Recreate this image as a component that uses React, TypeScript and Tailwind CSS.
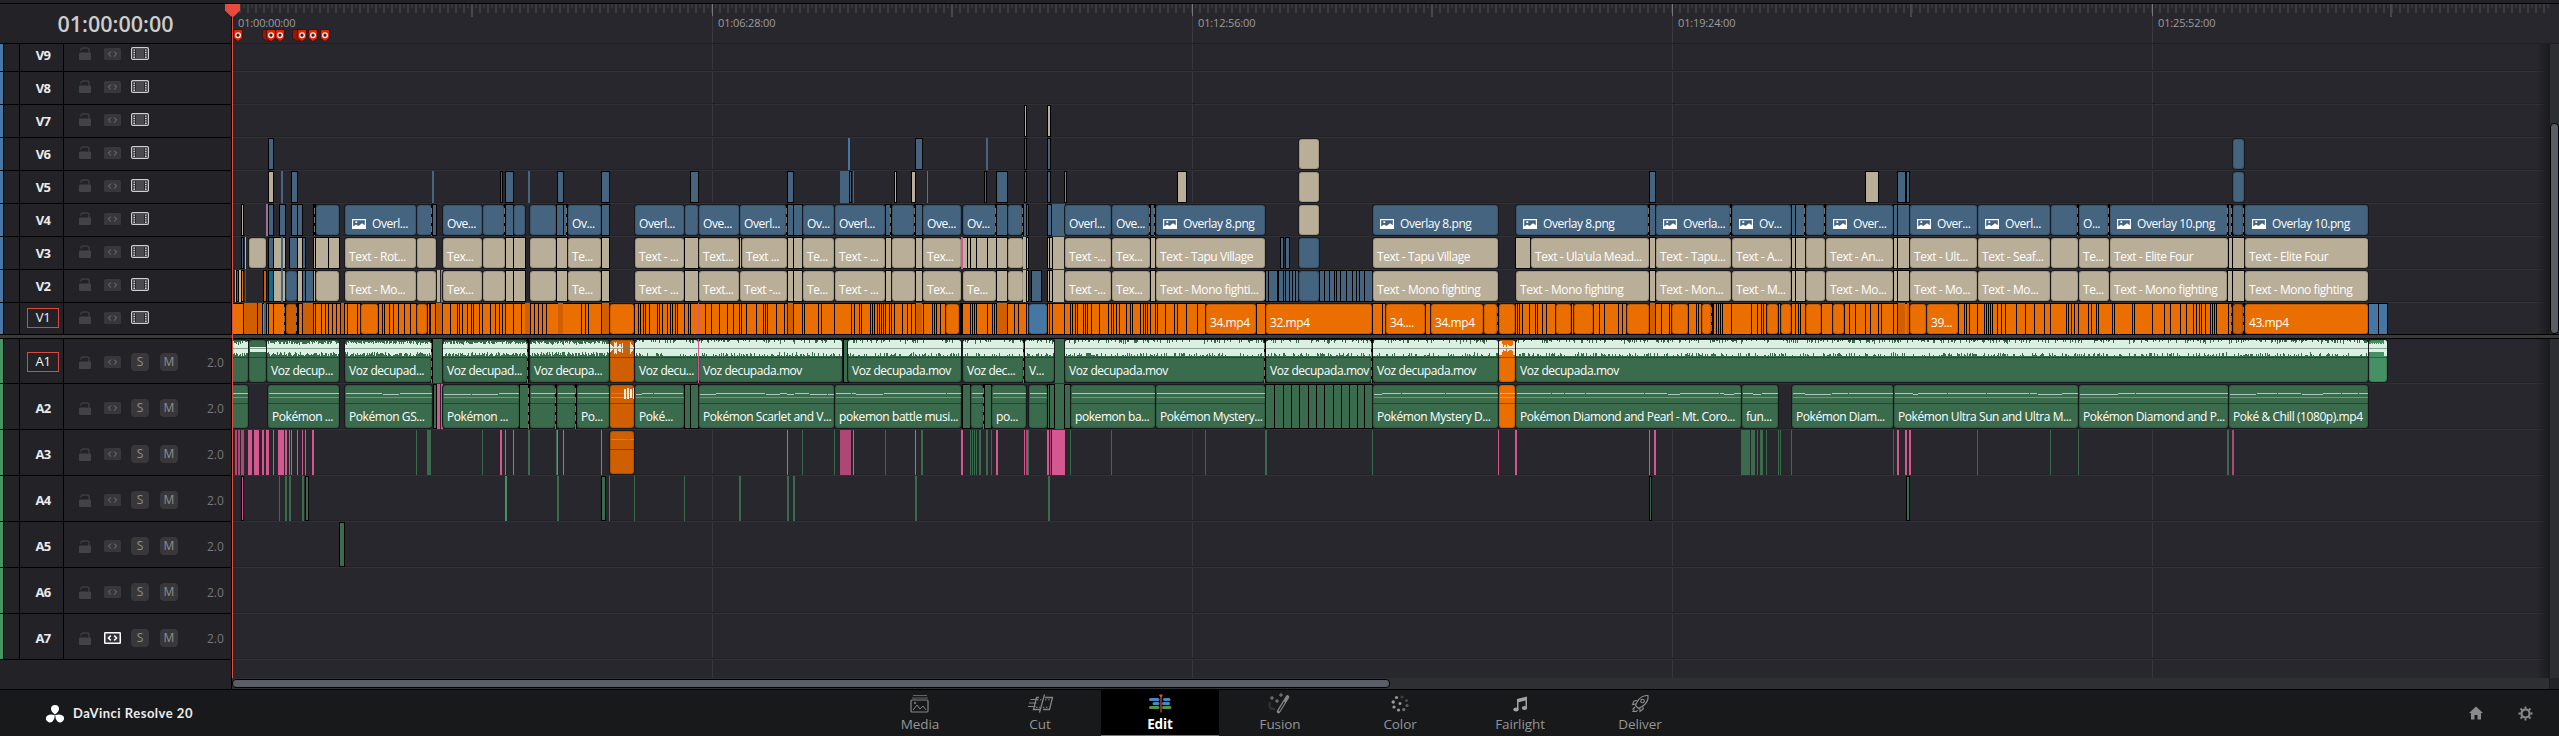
import type { ReactNode } from 'react';
import { clsx } from 'clsx';

const ORIGIN = 232;

type Tone = 'blue' | 'sky' | 'teal' | 'sand' | 'green' | 'mint' | 'orange' | 'rust' | 'pink' | 'rose' | 'violet';
type Kind = 'wide' | 'narrow' | 'bare' | 'dash';
type Clip = { kind: Kind; x: number; end: number; tone: Tone; label?: string; still?: boolean };

const tones: Record<Tone, string> = {
  blue: 'bg-[#446480]',
  sky: 'bg-[#4477a3]',
  teal: 'bg-[#17688a]',
  sand: 'bg-[#b9ae97]',
  green: 'bg-[#3a6b4d]',
  mint: 'bg-[#459164]',
  orange: 'bg-[#eb6e01]',
  rust: 'bg-[#cf5f00]',
  pink: 'bg-[#d2588f]',
  rose: 'bg-[#ae4676]',
  violet: 'bg-[#9a70a2]',
};

const W = (x: number, end: number, tone: Tone, label?: string, still?: boolean): Clip => ({ kind: 'wide', x, end, tone, label, still });
const N = (x: number, end: number, tone: Tone): Clip => ({ kind: 'narrow', x, end, tone });
const B = (x: number, end: number, tone: Tone): Clip => ({ kind: 'bare', x, end, tone });
const D = (x: number): Clip => ({ kind: 'dash', x, end: x + 2, tone: 'blue' });
const cuts = (tone: Tone, edges: number[]): Clip[] => edges.slice(0, -1).map((x, i) => N(x, edges[i + 1] + 1, tone));
const lines = (tone: Tone, xs: number[]): Clip[] => xs.map((x) => B(x, x + 1, tone));

const v7: Clip[] = [N(1024, 1027, 'sand'), N(1047, 1051, 'sand')];

const v6: Clip[] = [
  N(268, 274, 'blue'), B(848, 850, 'sky'), N(915, 923, 'blue'), B(986, 988, 'blue'), N(1024, 1027, 'blue'),
  N(1047, 1051, 'blue'), W(1299, 1319, 'sand'), W(2233, 2244, 'blue'),
];

const v5: Clip[] = [
  N(268, 274, 'sand'), B(281, 283, 'blue'), N(291, 298, 'blue'), B(432, 434, 'blue'), N(500, 503, 'blue'),
  N(505, 514, 'blue'), B(528, 530, 'blue'), N(557, 564, 'blue'), N(601, 610, 'blue'), N(690, 699, 'blue'),
  N(787, 794, 'blue'), B(840, 849, 'blue'), N(849, 852, 'blue'), B(853, 854, 'blue'), N(894, 897, 'sand'),
  N(911, 916, 'sand'), B(927, 928, 'sky'), N(984, 987, 'blue'), N(996, 1008, 'blue'), N(1024, 1027, 'blue'),
  N(1047, 1051, 'blue'), N(1064, 1067, 'pink'), N(1177, 1187, 'sand'), W(1299, 1319, 'sand'), N(1649, 1656, 'blue'),
  N(1865, 1879, 'sand'), N(1897, 1906, 'blue'), N(1906, 1910, 'blue'), W(2233, 2244, 'blue'),
];

const v4: Clip[] = [
  N(241, 244, 'sand'), B(266, 268, 'violet'), N(268, 274, 'blue'), N(279, 286, 'blue'), N(291, 298, 'blue'),
  N(297, 303, 'blue'), N(313, 316, 'blue'), D(314), W(316, 339, 'blue'), W(345, 416, 'blue', 'Overl...', true),
  W(417, 432, 'blue'), N(432, 437, 'blue'), D(431), W(443, 482, 'blue', 'Ove...'), W(483, 504, 'blue'), D(504),
  N(505, 514, 'blue'), W(514, 525, 'blue'), W(530, 556, 'blue'), N(556, 564, 'blue'), N(563, 567, 'blue'), D(566),
  W(568, 601, 'blue', 'Ov...'), N(601, 610, 'blue'), W(635, 684, 'blue', 'Overl...'), W(685, 698, 'blue'),
  W(699, 739, 'blue', 'Ove...'), W(740, 786, 'blue', 'Overl...'), D(786), N(787, 794, 'blue'), N(793, 803, 'blue'),
  W(803, 834, 'blue', 'Ov...'), W(835, 885, 'blue', 'Overl...'), N(885, 891, 'blue'), D(890), W(892, 914, 'blue'), D(914),
  N(915, 923, 'blue'), W(923, 961, 'blue', 'Ove...'), W(963, 996, 'blue', 'Ov...'), D(995), N(996, 1008, 'blue'),
  W(1008, 1022, 'blue'), D(1022), B(1023, 1026, 'blue'), N(1026, 1029, 'blue'), N(1047, 1052, 'blue'), B(1052, 1065, 'blue'),
  W(1065, 1111, 'blue', 'Overl...'), W(1112, 1149, 'blue', 'Ove...'), D(1149), N(1150, 1155, 'blue'), D(1154),
  W(1156, 1265, 'blue', 'Overlay 8.png', true), W(1299, 1319, 'sand'), W(1373, 1498, 'blue', 'Overlay 8.png', true),
  W(1516, 1648, 'blue', 'Overlay 8.png', true), D(1648), N(1649, 1656, 'blue'), W(1656, 1730, 'blue', 'Overla...', true), D(1730),
  W(1732, 1791, 'blue', 'Ov...', true), N(1791, 1796, 'blue'), N(1795, 1806, 'blue'), D(1804), W(1806, 1824, 'blue'), D(1824),
  W(1826, 1893, 'blue', 'Over...', true), N(1893, 1898, 'blue'), N(1897, 1910, 'blue'),
  W(1910, 1977, 'blue', 'Over...', true), W(1978, 2050, 'blue', 'Overl...', true), W(2051, 2077, 'blue'), D(2077),
  W(2079, 2108, 'blue', 'O...'), D(2108), W(2110, 2228, 'blue', 'Overlay 10.png', true), D(2227), N(2228, 2233, 'blue'), D(2231),
  W(2233, 2243, 'blue'), D(2243), W(2245, 2368, 'blue', 'Overlay 10.png', true),
];

const v3: Clip[] = [
  N(241, 244, 'blue'), B(245, 246, 'sand'), W(249, 266, 'sand'), N(268, 274, 'blue'), N(273, 286, 'sand'), B(281, 283, 'blue'),
  N(289, 298, 'blue'), N(297, 303, 'sand'), N(302, 306, 'blue'), N(313, 316, 'sand'), ...cuts('sand', [315, 328, 339]),
  W(345, 416, 'sand', 'Text - Rot...'), W(417, 436, 'sand'), W(443, 482, 'sand', 'Tex...'), W(483, 505, 'sand'),
  ...cuts('sand', [505, 513, 525]), W(530, 556, 'sand'), N(556, 568, 'sand'), W(568, 601, 'sand', 'Te...'), N(601, 610, 'sand'),
  W(635, 684, 'sand', 'Text - ...'), N(684, 699, 'sand'), W(699, 739, 'sand', 'Text...'), N(739, 742, 'sand'),
  W(742, 787, 'sand', 'Text ...'), ...cuts('sand', [787, 793, 802]), W(803, 834, 'sand', 'Te...'), W(835, 885, 'sand', 'Text - ...'),
  N(885, 892, 'sand'), W(892, 915, 'sand'), N(915, 923, 'sand'), W(923, 961, 'sand', 'Tex...'),
  ...cuts('sand', [962, 967, 970, 976, 987, 996, 1007]), B(961, 963, 'pink'), W(1008, 1023, 'sand'), B(1023, 1026, 'sand'), N(1026, 1029, 'sand'),
  ...cuts('sand', [1047, 1049, 1052]), B(1053, 1064, 'sand'), W(1065, 1111, 'sand', 'Text -...'), W(1112, 1150, 'sand', 'Tex...'),
  N(1150, 1156, 'sand'), W(1156, 1265, 'sand', 'Text - Tapu Village'), N(1280, 1284, 'blue'), N(1285, 1290, 'blue'),
  W(1299, 1319, 'blue'), W(1373, 1498, 'sand', 'Text - Tapu Village'), N(1515, 1531, 'sand'),
  W(1531, 1649, 'sand', "Text - Ula'ula Mead..."), N(1649, 1656, 'sand'), W(1656, 1731, 'sand', 'Text - Tapu...'),
  W(1732, 1791, 'sand', 'Text - A...'), ...cuts('sand', [1791, 1795, 1805]), W(1806, 1825, 'sand'), W(1826, 1893, 'sand', 'Text - An...'),
  ...cuts('sand', [1893, 1897, 1909]), W(1910, 1977, 'sand', 'Text - Ult...'), W(1978, 2050, 'sand', 'Text - Seaf...'),
  W(2051, 2078, 'sand'), W(2079, 2109, 'sand', 'Te...'), W(2110, 2228, 'sand', 'Text - Elite Four'),
  ...cuts('sand', [2228, 2232, 2244]), W(2245, 2368, 'sand', 'Text - Elite Four'),
];

const v2: Clip[] = [
  B(235, 237, 'sand'), N(236, 239, 'blue'), B(239, 241, 'sand'), N(241, 244, 'orange'), B(245, 246, 'teal'), N(263, 267, 'rust'),
  N(268, 274, 'teal'), N(273, 286, 'sand'), B(281, 283, 'blue'), W(286, 297, 'blue'), N(297, 303, 'sand'), N(302, 306, 'blue'),
  N(305, 314, 'blue'), N(313, 316, 'sand'), W(316, 339, 'sand'), W(345, 416, 'sand', 'Text - Mo...'), W(417, 436, 'sand'),
  B(437, 440, 'sand'), B(441, 443, 'violet'), W(443, 482, 'sand', 'Tex...'), W(483, 505, 'sand'), ...cuts('sand', [505, 513, 525]),
  W(530, 556, 'sand'), N(556, 568, 'sand'), W(568, 601, 'sand', 'Te...'), N(601, 610, 'sand'), W(635, 684, 'sand', 'Text - ...'),
  N(684, 699, 'sand'), W(699, 739, 'sand', 'Text...'), W(740, 787, 'sand', 'Text -...'), ...cuts('sand', [787, 793, 802]),
  W(803, 834, 'sand', 'Te...'), W(835, 885, 'sand', 'Text - ...'), N(885, 892, 'sand'), W(892, 915, 'sand'), N(915, 923, 'sand'),
  W(923, 961, 'sand', 'Tex...'), W(963, 996, 'sand', 'Te...'), N(996, 1008, 'sand'), W(1008, 1023, 'sand'), B(1023, 1026, 'sand'),
  N(1026, 1029, 'sand'), N(1031, 1042, 'blue'), ...cuts('sand', [1047, 1049, 1052]), B(1053, 1064, 'sand'),
  W(1065, 1111, 'sand', 'Text -...'), W(1112, 1150, 'sand', 'Tex...'), N(1150, 1156, 'sand'),
  W(1156, 1265, 'sand', 'Text - Mono fighti...'), ...cuts('blue', [1265, 1268, 1277, 1278, 1283, 1285, 1289, 1292, 1295, 1298]),
  W(1299, 1319, 'blue'), ...cuts('blue', [1319, 1324, 1329, 1334, 1336, 1340, 1346, 1352, 1356, 1359, 1364, 1372]),
  W(1373, 1498, 'sand', 'Text - Mono fighting'), W(1516, 1649, 'sand', 'Text - Mono fighting'), N(1649, 1656, 'sand'),
  W(1656, 1731, 'sand', 'Text - Mon...'), W(1732, 1791, 'sand', 'Text - M...'), ...cuts('sand', [1791, 1795, 1805]),
  W(1806, 1825, 'sand'), W(1826, 1893, 'sand', 'Text - Mo...'), ...cuts('sand', [1893, 1897, 1909]),
  W(1910, 1977, 'sand', 'Text - Mo...'), W(1978, 2050, 'sand', 'Text - Mo...'), W(2051, 2078, 'sand'), W(2079, 2109, 'sand', 'Te...'),
  W(2110, 2227, 'sand', 'Text - Mono fighting'), ...cuts('sand', [2227, 2232, 2244]), W(2245, 2368, 'sand', 'Text - Mono fighting'),
];

const v1: Clip[] = [
  ...cuts('orange', [230, 243, 257, 262, 266, 268, 273, 285]), B(244, 257, 'rust'), B(258, 262, 'rust'), B(264, 266, 'blue'),
  D(284), W(286, 297, 'rust'), D(296),
  ...cuts('orange', [298, 302, 313, 315, 321, 325, 328, 332, 336, 340, 344, 347, 357, 360]), B(303, 313, 'rust'), B(341, 344, 'rust'),
  W(361, 378, 'orange'), ...cuts('orange', [378, 382, 384, 389, 393, 398, 404, 410, 416]), W(417, 427, 'orange'),
  ...cuts('orange', [427, 429, 430, 435, 442, 450, 457, 459, 462, 467, 471, 473, 479, 482, 490, 495, 499, 502, 505, 513, 521, 530, 534, 538, 542, 546, 581, 585, 588, 601, 609]),
  B(436, 442, 'rust'), B(525, 530, 'rust'), B(558, 563, 'rust'), B(602, 609, 'rust'),
  W(610, 634, 'orange'),
  ...cuts('orange', [634, 638, 640, 643, 645, 649, 657, 659, 662, 667, 670, 672, 675, 677, 684, 688, 690, 705, 711, 719, 727, 733, 739, 741, 746, 756, 763, 765, 767, 776, 784, 787, 793, 802, 804, 818, 821, 834, 851, 854, 859, 861, 870, 872, 874, 877, 879, 881, 883, 885, 889, 891, 894, 902, 907, 911, 915, 923, 932, 934, 936, 940, 945]),
  B(698, 699, 'pink'), B(788, 793, 'rust'), B(916, 922, 'rust'), W(946, 959, 'orange'),
  ...cuts('orange', [960, 961, 962, 970, 972, 974, 976, 987, 992, 994, 996, 1007, 1014, 1018, 1026, 1028]), B(997, 1007, 'rust'),
  W(1029, 1047, 'sky'),
  ...cuts('orange', [1047, 1049, 1052, 1064, 1070, 1072, 1075, 1077, 1083, 1085, 1087, 1091, 1099, 1108, 1111, 1113, 1116, 1119, 1126, 1130, 1132, 1140, 1143, 1145, 1147, 1150, 1155, 1157, 1165, 1174, 1177, 1186, 1197, 1205]),
  W(1206, 1256, 'orange', '34.mp4'), N(1256, 1266, 'orange'), W(1266, 1372, 'orange', '32.mp4'),
  ...cuts('orange', [1372, 1382, 1385]), W(1386, 1425, 'orange', '34....'), N(1425, 1431, 'orange'), W(1431, 1483, 'orange', '34.mp4'),
  W(1484, 1497, 'orange'), D(1497), W(1499, 1515, 'orange'),
  ...cuts('orange', [1515, 1517, 1519, 1522, 1529, 1535, 1537, 1542, 1546, 1555]), W(1556, 1571, 'orange'), N(1571, 1574, 'orange'),
  W(1574, 1593, 'orange'), ...cuts('orange', [1593, 1599, 1604, 1618, 1622, 1626]), W(1627, 1649, 'orange'),
  ...cuts('orange', [1649, 1655, 1661, 1669, 1671]), B(1650, 1655, 'rust'), W(1672, 1688, 'orange'),
  ...cuts('orange', [1688, 1696, 1698, 1701]), W(1702, 1711, 'orange'), D(1711),
  ...cuts('orange', [1713, 1716, 1718, 1720, 1722, 1731, 1751, 1757, 1761, 1763, 1766]), W(1767, 1778, 'orange'), N(1778, 1781, 'orange'),
  W(1781, 1791, 'orange'), ...cuts('orange', [1791, 1795, 1798, 1800, 1805]), W(1806, 1821, 'orange'), N(1821, 1833, 'orange'),
  W(1833, 1844, 'orange'), ...cuts('orange', [1844, 1849, 1855, 1865, 1870, 1878, 1881, 1893, 1897, 1909]), B(1898, 1905, 'rust'), B(1907, 1909, 'rust'),
  W(1910, 1926, 'orange'), W(1927, 1958, 'orange', '39...'),
  ...cuts('orange', [1958, 1964, 1966, 1969, 1977, 1984, 1986, 1988, 1990, 1992, 1997, 2001, 2005, 2016, 2025, 2034, 2044, 2050, 2066, 2068, 2071, 2074, 2078, 2088, 2091, 2096, 2098, 2112, 2114, 2132, 2134, 2152, 2164, 2170, 2180, 2186, 2193, 2196, 2199, 2201, 2205, 2210, 2212, 2214, 2216, 2228, 2232]),
  D(2231), W(2233, 2243, 'rust'), D(2243), W(2245, 2368, 'orange', '43.mp4'), ...cuts('sky', [2368, 2378, 2387]),
];

const a1: Clip[] = [
  W(230, 248, 'green'), W(249, 266, 'green'), W(267, 339, 'green', 'Voz decup...'), W(345, 431, 'green', 'Voz decupad...'), D(431),
  B(433, 442, 'green'), W(443, 527, 'green', 'Voz decupad...'), D(527), W(530, 609, 'green', 'Voz decupa...'), W(610, 634, 'rust'),
  W(635, 698, 'green', 'Voz decu...'), W(699, 842, 'green', 'Voz decupada.mov'), B(698, 699, 'pink'), N(843, 849, 'green'),
  W(848, 961, 'green', 'Voz decupada.mov'), W(963, 1023, 'green', 'Voz dec...'), D(1023), W(1025, 1054, 'green', 'V...'),
  B(1055, 1064, 'green'), W(1065, 1264, 'green', 'Voz decupada.mov'), D(1264), W(1266, 1371, 'green', 'Voz decupada.mov'), D(1371),
  W(1373, 1498, 'green', 'Voz decupada.mov'), W(1499, 1515, 'orange'), W(1516, 2368, 'green', 'Voz decupada.mov'), W(2369, 2387, 'mint'),
];

const a2: Clip[] = [
  W(230, 248, 'green'), W(268, 339, 'green', 'Pokémon ...'), W(345, 432, 'green', 'Pokémon GS...'), N(433, 437, 'green'),
  B(437, 440, 'pink'), B(441, 443, 'pink'), W(443, 519, 'green', 'Pokémon ...'), N(519, 529, 'green'), D(528), W(530, 555, 'green'), D(555),
  W(557, 575, 'green'), D(575), W(577, 609, 'green', 'Po...'), W(610, 634, 'rust'), W(635, 684, 'green', 'Poké...'),
  ...cuts('green', [684, 690, 698]), W(699, 834, 'green', 'Pokémon Scarlet and V...'), W(835, 961, 'green', 'pokemon battle musi...'),
  N(962, 971, 'green'), W(971, 983, 'green'), D(983), N(984, 992, 'green'), W(992, 1026, 'green', 'po...'), W(1029, 1047, 'green'),
  ...cuts('green', [1047, 1049, 1054]), B(1055, 1064, 'green'), N(1064, 1071, 'green'), W(1071, 1155, 'green', 'pokemon ba...'),
  W(1156, 1265, 'green', 'Pokémon Mystery...'),
  ...cuts('green', [1265, 1274, 1283, 1291, 1299, 1308, 1316, 1324, 1333, 1341, 1349, 1357, 1364, 1372]),
  W(1373, 1498, 'green', 'Pokémon Mystery D...'), W(1499, 1515, 'orange'), W(1516, 1741, 'green', 'Pokémon Diamond and Pearl - Mt. Coro...'),
  W(1742, 1778, 'green', 'fun...'), W(1792, 1893, 'green', 'Pokémon Diam...'), W(1894, 2078, 'green', 'Pokémon Ultra Sun and Ultra M...'),
  W(2079, 2228, 'green', 'Pokémon Diamond and P...'), W(2229, 2368, 'green', 'Poké & Chill (1080p).mp4'),
];

const a3: Clip[] = [
  B(235, 237, 'rose'), B(238, 240, 'rose'), B(241, 244, 'rose'), B(248, 252, 'pink'), B(254, 259, 'pink'), B(262, 264, 'pink'),
  B(266, 269, 'pink'), B(278, 284, 'pink'), B(285, 287, 'pink'), B(312, 314, 'pink'),
  ...lines('pink', [273, 289, 291, 297, 302, 305, 505, 513, 557, 563, 601, 787, 853, 915, 1024, 1498, 1649]),
  ...lines('green', [416, 482, 556, 802, 834, 885, 970, 972, 974, 976, 991, 1028, 1070, 1111, 1205, 1372, 1757, 1766, 1778, 1780, 1791, 1893, 1977, 2050, 2078]),
  B(427, 431, 'green'), B(500, 502, 'pink'), B(528, 530, 'green'), W(610, 634, 'rust'), B(840, 851, 'rose'), B(921, 923, 'green'),
  B(961, 963, 'pink'), B(979, 981, 'green'), B(986, 988, 'green'), B(996, 998, 'pink'), B(1026, 1028, 'rose'), B(1047, 1049, 'pink'),
  B(1050, 1051, 'rose'), B(1052, 1065, 'pink'), B(1265, 1267, 'green'), B(1515, 1517, 'pink'), B(1654, 1656, 'pink'),
  B(1741, 1750, 'green'), B(1751, 1755, 'green'), B(1760, 1763, 'green'), B(1897, 1899, 'pink'), B(1905, 1907, 'pink'),
  B(1909, 1911, 'pink'), B(2227, 2229, 'green'), B(2232, 2234, 'rose'),
];

const a4: Clip[] = [
  N(241, 244, 'pink'), ...lines('green', [279, 634, 684]), B(285, 287, 'green'), B(289, 291, 'green'), B(302, 304, 'green'),
  N(305, 309, 'green'), B(505, 507, 'mint'), B(557, 559, 'green'), N(601, 606, 'green'), B(609, 610, 'rose'), B(739, 741, 'green'),
  B(787, 789, 'green'), B(793, 795, 'green'), B(915, 917, 'green'), B(1048, 1050, 'green'), N(1649, 1652, 'green'), N(1906, 1910, 'green'),
];

const a5: Clip[] = [N(339, 345, 'green')];

const videoTracks: [string, Clip[]][] = [
  ['V9', []], ['V8', []], ['V7', v7], ['V6', v6], ['V5', v5], ['V4', v4], ['V3', v3], ['V2', v2], ['V1', v1],
];
const audioTracks: [string, Clip[]][] = [
  ['A1', a1], ['A2', a2], ['A3', a3], ['A4', a4], ['A5', a5], ['A6', []], ['A7', []],
];

function noise(seed: number) {
  let s = (seed * 2654435761) >>> 0;
  return () => {
    s = (s * 1664525 + 1013904223) >>> 0;
    return s / 4294967296;
  };
}

function voicePath(clip: Clip, width: number) {
  const rand = noise(clip.x);
  if (clip.x === 249) return `M0.5 9H${width}`;
  let d = '';
  for (let i = 0; i < width; i++) {
    let top = 0;
    let bottom = 16;
    if (clip.tone === 'rust') {
      if (i > 12 && i < 20) continue;
      const reach = i % 4 === 3 ? 1 : 2 + rand() * 4;
      top = 8 - reach;
      bottom = 8 + reach;
    } else if (clip.tone === 'orange') {
      const reach = Math.abs(i - 8) > 5 ? 7 : 1 + rand() * 3;
      top = 8 - reach;
      bottom = 8 + reach;
    } else if (clip.tone === 'mint') {
      top = i > width - 4 ? 0 : 3 + rand();
      bottom = i > width - 4 ? 16 : 12;
    } else if (clip.x < 610) {
      top = 1 + rand() * 3.5;
      bottom = 12 + rand() * 4;
    } else {
      top = rand() < 0.4 ? rand() * 3.6 : 0;
      bottom = rand() < 0.45 ? 16 - rand() * 3.6 : 16;
    }
    d += `M${i + 0.5} ${top.toFixed(1)}V${bottom.toFixed(1)}`;
  }
  return d;
}

function musicPath(clip: Clip, width: number) {
  const rand = noise(clip.x);
  let d = '';
  let i = 1;
  while (i < width) {
    const run = 3 + rand() * 26;
    const y = rand() < 0.85 ? 8.5 : 9.5;
    d += `M${i.toFixed(0)} ${y}H${Math.min(width, i + run).toFixed(0)}`;
    i += run + (rand() < 0.4 ? 1 : 0);
  }
  return d;
}

function StillIcon() {
  return (
    <svg className="mr-[6px] ml-[3px] h-[10px] w-[14px] shrink-0" viewBox="0 0 14 10">
      <path fillRule="evenodd" fill="#fff" d="M0 0H14V10H0ZM1.2 1.2V7.4L4 5.6L6.5 7L10 4.2L12.8 6.2V1.2ZM3.4 2.2H5.2V4H3.4Z" />
    </svg>
  );
}

function ClipView({ clip, audio }: { clip: Clip; audio: number }) {
  const { kind, x, end, tone, label, still } = clip;
  const width = end - x;
  const box = { left: x - ORIGIN, width };
  if (kind === 'dash') {
    return (
      <div className="absolute inset-y-0 z-10 flex flex-col gap-[3px] overflow-hidden bg-black pt-1" style={box}>
        {[0, 1, 2, 3, 4].map((i) => (
          <span key={i} className="h-[6px] w-px shrink-0 bg-[#77716a]" />
        ))}
      </div>
    );
  }
  if (kind === 'bare') return <div className={clsx('absolute inset-y-0', tones[tone])} style={box} />;
  if (kind === 'narrow') return <div className={clsx('absolute inset-y-0 border border-black', tones[tone])} style={box} />;
  return (
    <div
      className={clsx(
        'absolute top-px bottom-px overflow-hidden rounded-[3px] shadow-[0_0_0_1px_#18191c,inset_0_0_0_1px_rgba(0,0,0,0.13)]',
        tones[tone],
      )}
      style={box}
    >
      {audio === 1 && (
        <svg className="absolute top-0 left-0" width={width} height="18" shapeRendering="crispEdges">
          <path d={voicePath(clip, width)} stroke={tone === 'rust' || tone === 'orange' ? '#fbe6d2' : '#daf0e3'} strokeWidth={x === 249 ? 5 : 1} />
          <path d={`M0 8.5H${width}`} stroke="#5f7a6c" strokeOpacity="0.65" />
          <path d={`M0 17.5H${width}`} stroke="#000" strokeOpacity="0.33" />
        </svg>
      )}
      {audio >= 2 && (
        <svg className="absolute top-0 left-0" width={width} height="20" shapeRendering="crispEdges">
          <path d={musicPath(clip, width)} stroke={tone === 'rust' ? '#a08a70' : '#aecbb9'} />
          {audio === 2 && <path d={`M1 12.5H${width}`} stroke="#fff" strokeOpacity="0.28" />}
          {audio === 2 && tone === 'rust' && <path d="M14.5 4V14M18 3V14M21 4V13M23.5 3V14" stroke="#fff0dd" strokeWidth="2" />}
          <path d={`M0 18.5H${width}`} stroke="#000" strokeOpacity="0.33" />
        </svg>
      )}
      {label && (
        <div
          className={clsx(
            'flex items-center pl-1 text-[12px] leading-4 font-medium tracking-[-0.43px] whitespace-nowrap text-white',
            audio === 0 && 'pt-[11px]',
            audio === 1 && 'pt-[23px]',
            audio === 2 && 'pt-[24px]',
          )}
        >
          {still && <StillIcon />}
          {label}
        </div>
      )}
    </div>
  );
}

function Lane({ clips, kind, audio = 0 }: { clips: Clip[]; kind: 'video' | 'audio' | 'first'; audio?: number }) {
  return (
    <div
      className={clsx(
        'relative shrink-0 border-b border-[#313136] shadow-[inset_0_-1px_0_#232327]',
        kind === 'video' && 'h-[33px]',
        kind === 'audio' && 'h-[46px]',
        kind === 'first' && 'h-[45px]',
      )}
    >
      {clips.map((clip, i) => (
        <ClipView key={i} clip={clip} audio={audio} />
      ))}
    </div>
  );
}

function LockIcon() {
  return (
    <svg className="h-[13px] w-3" viewBox="0 0 12 13">
      <path d="M2 3.5V2.8Q2 1 4 1H8Q10 1 10 2.8V6" fill="none" stroke="#3e3e42" strokeWidth="1.4" />
      <rect y="5.5" width="12" height="7.5" rx="1" fill="#434347" />
    </svg>
  );
}

function SyncIcon({ active }: { active?: boolean }) {
  return (
    <svg className="h-3 w-[17px]" viewBox="0 0 17 12">
      {active ? (
        <rect x="0.75" y="0.75" width="15.5" height="10.5" rx="0.5" fill="#333338" stroke="#fff" strokeWidth="1.5" />
      ) : (
        <rect width="17" height="12" rx="1.5" fill="#38383c" />
      )}
      <path d="M6.8 3.6L4.4 6L6.8 8.4M10.2 3.6L12.6 6L10.2 8.4" fill="none" stroke={active ? '#fff' : '#7b7b7e'} strokeWidth={active ? 1.5 : 1} />
    </svg>
  );
}

function FilmIcon() {
  return (
    <svg className="h-[13px] w-[18px]" viewBox="0 0 18 13">
      <rect x="0.6" y="0.6" width="16.8" height="11.8" rx="1.2" fill="#2a2a2e" stroke="#cfcfcf" strokeWidth="1.2" />
      <rect x="5" y="2" width="8" height="9" fill="#4b4b4f" />
      <path d="M3.2 2.4V11M14.8 2.4V11" stroke="#e2e2e2" strokeWidth="1.5" strokeDasharray="1.4 1" />
    </svg>
  );
}

function TrackName({ name }: { name: string }) {
  if (name === 'V1' || name === 'A1') {
    return (
      <span className="flex h-5 w-8 items-center justify-center border border-[#dc4a3f] text-[13px] font-medium tracking-[-0.4px] text-[#f2f2f2]">
        {name}
      </span>
    );
  }
  return <span className="text-[13px] font-bold tracking-[-0.6px] text-[#eaeaea]">{name}</span>;
}

function ToggleKey({ children }: { children: ReactNode }) {
  return (
    <span className="flex h-[18px] w-[18px] items-center justify-center rounded-[4px] bg-[#38383b] text-[12px] font-medium text-[#8e8e90]">
      {children}
    </span>
  );
}

function TrackHeader({ name, kind }: { name: string; kind: 'video' | 'audio' | 'first' }) {
  const video = kind === 'video';
  return (
    <div className={clsx('flex shrink-0 border-b border-black', video ? 'h-[33px]' : kind === 'first' ? 'h-[45px]' : 'h-[46px]')}>
      <div className={clsx('w-1 border-r border-black', video ? 'bg-[#4678a8]' : 'bg-[#479465]')} />
      <div className="w-4 border-r border-black" />
      <div
        className={clsx(
          'flex w-11 justify-center border-r border-black pl-[3px]',
          video ? 'h-[33px]' : 'h-[45px] items-center',
          kind === 'audio' && 'pt-[4px]',
          name === 'V1' ? 'pt-[5px]' : video && 'pt-[7px]',
        )}
      >
        <TrackName name={name} />
      </div>
      <div className={clsx('flex items-start pl-[15px]', video ? 'pt-2' : kind === 'first' ? 'pt-[14px]' : 'pt-[15px]')}>
        <span className={clsx(!video && 'pt-[3px]')}>
          <LockIcon />
        </span>
        <span className={clsx('ml-[13px]', video ? 'pt-px' : 'pt-[3px]')}>
          <SyncIcon active={name === 'A7'} />
        </span>
        <span className="ml-[10px]">{video ? <FilmIcon /> : <ToggleKey>S</ToggleKey>}</span>
        {!video && (
          <>
            <span className="ml-[11px]">
              <ToggleKey>M</ToggleKey>
            </span>
            <span className="ml-[29px] pt-px text-[12px] leading-[18px] text-[#77777a]">2.0</span>
          </>
        )}
      </div>
    </div>
  );
}

const rulerLabels = ['01:00:00:00', '01:06:28:00', '01:12:56:00', '01:19:24:00', '01:25:52:00'];

function Marker({ x, dim }: { x: number; dim?: boolean }) {
  return (
    <svg className="absolute top-[25px] h-[13px] w-[10px]" viewBox="0 0 10 13" style={{ left: x - ORIGIN }}>
      <path d="M0.5 2Q0.5 0.5 2 0.5H8Q9.5 0.5 9.5 2V9L5 12.5L0.5 9Z" fill={dim ? '#8c1a0a' : '#e22503'} stroke="#3a0c08" strokeWidth="0.8" />
      {!dim && <circle cx="5" cy="6.2" r="2.3" fill="#3b2020" stroke="#f3e9e6" strokeWidth="1.4" />}
    </svg>
  );
}

function Ruler() {
  const minor: string[] = [];
  const small: string[] = [];
  for (let x = 8; x < 2316; x += 8) {
    minor.push(`M${x} 0V9`);
    small.push(`M${x + 4} 0V4`);
  }
  return (
    <div className="relative h-10 flex-1 overflow-hidden border-b border-[#202024] bg-[#28272d]">
      <svg className="absolute inset-0 h-10 w-full" shapeRendering="crispEdges">
        <path d={minor.join('')} stroke="#3d3d41" strokeWidth="2" />
        <path d={small.join('')} stroke="#38383c" strokeWidth="2" />
        <path d="M240 0V13M720 0V13M1200 0V13M1679 0V13M2159 0V13" stroke="#48484c" strokeWidth="2" />
        <path d="M480.5 0V40M960.5 0V40M1440.5 0V40M1920.5 0V40" stroke="#3a3a40" />
        <path d="M480.5 0V12M960.5 0V12M1440.5 0V12M1920.5 0V12" stroke="#77777b" />
      </svg>
      <div className="flex pt-[11px] pl-[6px]">
        {rulerLabels.map((t) => (
          <span key={t} className="w-[480px] shrink-0 text-[11px] leading-4 tracking-[-0.15px] text-[#9c9c9e]">
            {t}
          </span>
        ))}
      </div>
      <Marker x={262} dim />
      <Marker x={292} dim />
      {[266, 275, 297, 308, 320, 233].map((x) => (
        <Marker key={x} x={x} />
      ))}
    </div>
  );
}

function GridLines() {
  return (
    <div className="absolute inset-0 flex pl-[480px]">
      {[0, 1, 2, 3].map((i) => (
        <span key={i} className="w-[480px] shrink-0 border-l border-[#37373c]" />
      ))}
    </div>
  );
}

function EdgeShade() {
  return <div className="absolute inset-y-0 right-0 w-3 bg-gradient-to-r from-transparent to-[#1b1b1e]" />;
}

const navIcons: Record<string, ReactNode> = {
  Media: (
    <g fill="none" stroke="#858586">
      <path d="M4 1.5H18M3 4H19" strokeWidth="1" opacity="0.7" />
      <rect x="2" y="6" width="17" height="12" rx="1" strokeWidth="1.2" />
      <path d="M4 16L8 11L11 15L14 12L17 16" />
      <circle cx="6" cy="9" r="0.8" />
    </g>
  ),
  Cut: (
    <g fill="none" stroke="#858586">
      <path d="M10 3.5H7.5L4.5 15.5H11M14 15.5H20.5L23.5 3.5H16" strokeWidth="1.3" />
      <path d="M15.5 0.5L10.5 18.5" strokeWidth="1.3" />
      <path d="M1.5 5.5H9M0 9H7.5M-1 12.5H6.5" strokeWidth="1.2" />
      <path d="M8 5.8H13M16 5.8H21M7 13.3H11M14 13.3H19" strokeDasharray="1.5 1.5" />
    </g>
  ),
  Edit: (
    <g fill="none" strokeWidth="3" strokeLinecap="round">
      <path d="M1.5 5.5H9M15.5 5.5H20M5 9.5H9M14.5 9.5H19.5" stroke="#4a86c6" />
      <path d="M1.5 13.5H9M14.5 13.5H21" stroke="#50963a" />
      <path d="M12 1V18" stroke="#e4473d" strokeWidth="1.2" />
      <path d="M11 1H13V2L12 3L11 2Z" fill="#e4473d" stroke="#e4473d" strokeWidth="1" />
    </g>
  ),
  Fusion: (
    <g fill="none" stroke="#858586">
      <path d="M18.5 3L9.5 17.5" strokeWidth="3.6" strokeLinecap="round" />
      <path d="M15.5 8L10 17" stroke="#18191a" strokeWidth="1.2" />
      <path d="M12 -1V3M10 1H14M3 2V6M1 4H5M8 5V9M6 7H10" strokeWidth="1" />
      <path d="M1 8Q-1 16 6 15" stroke="#303133" strokeWidth="2.5" />
    </g>
  ),
  Color: (
    <g fill="#9a9a9a">
      <circle cx="11" cy="9.5" r="1.5" />
      <circle cx="7.5" cy="3.5" r="1.6" />
      <circle cx="4.2" cy="8" r="1.7" />
      <circle cx="5" cy="13" r="1.6" />
      <circle cx="9.5" cy="16" r="1.6" />
      <circle cx="14.8" cy="15.5" r="1.6" opacity="0.7" />
      <circle cx="18" cy="11.5" r="1.6" opacity="0.5" />
      <circle cx="17.5" cy="6.5" r="1.6" opacity="0.35" />
      <circle cx="13" cy="3" r="1.6" opacity="0.3" />
    </g>
  ),
  Fairlight: (
    <g fill="#a2a2a2">
      <path d="M8 5L18 2.5V14H16.5V6.5L9.5 8.2V15.5H8Z" />
      <ellipse cx="7" cy="15.5" rx="2.7" ry="2" />
      <ellipse cx="15.5" cy="14" rx="2.7" ry="2" />
    </g>
  ),
  Deliver: (
    <g fill="none" stroke="#8e8e8f" strokeWidth="1.1">
      <path d="M19 1.5Q12 1 8 8L6.5 11.5L9.5 14.5L13 12.5Q20 8 19 1.5Z" />
      <circle cx="13.5" cy="7" r="1.8" />
      <path d="M8.5 6.5L5 7L3.5 10.5L7 10M14 12.5L14.2 15L11 17.5L10.8 14M6 13L3.5 15.5M5.5 15.5L4 17.5H7.5L8.5 16" />
    </g>
  ),
};

function NavTab({ name }: { name: string }) {
  const active = name === 'Edit';
  return (
    <div
      className={clsx(
        'flex w-[118px] flex-col items-center pt-[4px] text-[13.5px] tracking-[-0.1px]',
        active ? 'border-b border-[#e0483d] bg-black font-bold text-white' : 'text-[#959596]',
      )}
    >
      <svg className="h-5 w-[22px] overflow-visible" viewBox="0 0 22 20">
        {navIcons[name]}
      </svg>
      <span className="leading-[20px]">{name}</span>
    </div>
  );
}

export default function App() {
  return (
    <div className="relative flex h-[736px] w-[2559px] flex-col overflow-hidden bg-[#222227] font-['Open_Sans','Noto_Sans',sans-serif]">
      <div className="h-1 shrink-0 border-b border-black" />

      <div className="flex h-10 shrink-0">
        <div className="flex w-[232px] items-center justify-center border-r border-b border-black text-[21.5px] font-semibold text-[#cdcdcd]">
          <span className="pt-[2px]">01:00:00:00</span>
        </div>
        <Ruler />
        <div className="w-[10px] border-b border-[#202024] bg-[#28272d]" />
      </div>

      <div className="flex h-[290px] shrink-0 overflow-hidden">
        <div className="flex w-[232px] flex-col overflow-hidden border-r border-black">
          <div className="-mt-[5px] flex shrink-0 flex-col">
            {videoTracks.map(([name]) => (
              <TrackHeader key={name} name={name} kind="video" />
            ))}
          </div>
        </div>
        <div className="relative flex flex-1 flex-col overflow-hidden bg-[#28272d]">
          <GridLines />
          <div className="-mt-[5px] flex shrink-0 flex-col">
            {videoTracks.map(([name, clips]) => (
              <Lane key={name} clips={clips} kind="video" />
            ))}
          </div>
          <EdgeShade />
        </div>
        <div className="w-[10px] border-l border-[#1c1c1f] bg-[#2d2e31] pt-[79px]">
          <div className="h-[211px] w-[9px] rounded-[4px] border border-black bg-[#5b5e66]" />
        </div>
      </div>

      <div className="h-[5px] shrink-0 border-y border-black bg-[#3a3a3b]" />

      <div className="flex h-[339px] shrink-0 overflow-hidden">
        <div className="flex w-[232px] flex-col border-r border-black">
          {audioTracks.map(([name]) => (
            <TrackHeader key={name} name={name} kind={name === 'A1' ? 'first' : 'audio'} />
          ))}
        </div>
        <div className="relative flex flex-1 flex-col overflow-hidden bg-[#28272d]">
          <GridLines />
          {audioTracks.map(([name, clips], i) => (
            <Lane key={name} clips={clips} kind={i === 0 ? 'first' : 'audio'} audio={i + 1} />
          ))}
          <EdgeShade />
        </div>
        <div className="w-[10px] border-l border-[#1c1c1f] bg-[#2d2e31]" />
      </div>

      <div className="flex h-[11px] shrink-0">
        <div className="w-[232px] border-r border-black" />
        <div className="flex-1 bg-[#2e2f32] pt-px">
          <div className="h-[9px] w-[1158px] rounded-[4px] border border-black bg-[#5b5e66]" />
        </div>
        <div className="w-[10px] border-l border-[#1c1c1f]" />
      </div>

      <div className="flex h-[47px] shrink-0 justify-between border-t border-black bg-[#18191a]">
        <div className="flex w-[861px] items-center pt-[2px] pl-[46px]">
          <svg className="h-[18px] w-[18px]" viewBox="0 0 18 18" fill="#fff">
            <path d="M9 9.5Q5 6.5 5 4A4 4 0 0 1 13 4Q13 6.5 9 9.5Z" />
            <path d="M8.7 10Q8.9 14.5 6.5 16.5A4 4 0 0 1 0.8 11Q3 8.5 8.7 10Z" />
            <path d="M9.3 10Q9.1 14.5 11.5 16.5A4 4 0 0 0 17.2 11Q15 8.5 9.3 10Z" />
          </svg>
          <span className="ml-[9px] font-['Lato',sans-serif] text-[13px] font-bold tracking-[0.5px] text-[#ececec]">DaVinci Resolve 20</span>
        </div>
        <nav className="flex w-[838px] gap-[2px]">
          {Object.keys(navIcons).map((name) => (
            <NavTab key={name} name={name} />
          ))}
        </nav>
        <div className="flex flex-1 items-center justify-end gap-[35px] pr-[26px]">
          <svg className="h-[14px] w-[14px]" viewBox="0 0 14 14" fill="#8a8a8b">
            <path d="M7 0.5L14 7H12V13.5H8.5V9H5.5V13.5H2V7H0Z" />
          </svg>
          <svg className="h-[15px] w-[15px]" viewBox="0 0 16 16" fill="none" stroke="#8a8a8b">
            <circle cx="8" cy="8" r="4.3" strokeWidth="2.2" />
            <path d="M8 0.5V3M8 13V15.5M0.5 8H3M13 8H15.5M2.7 2.7L4.5 4.5M11.5 11.5L13.3 13.3M2.7 13.3L4.5 11.5M11.5 4.5L13.3 2.7" strokeWidth="2" />
          </svg>
        </div>
      </div>

      <div className="absolute top-4 left-[232px] h-[662px] w-px bg-[#e64b3d]" />
      <svg className="absolute top-1 left-[224px] h-[13px] w-[17px]" viewBox="0 0 17 13">
        <path d="M1 0H16V6.5L10 12.5H7L1 6.5Z" fill="#e64b3d" />
      </svg>
    </div>
  );
}
